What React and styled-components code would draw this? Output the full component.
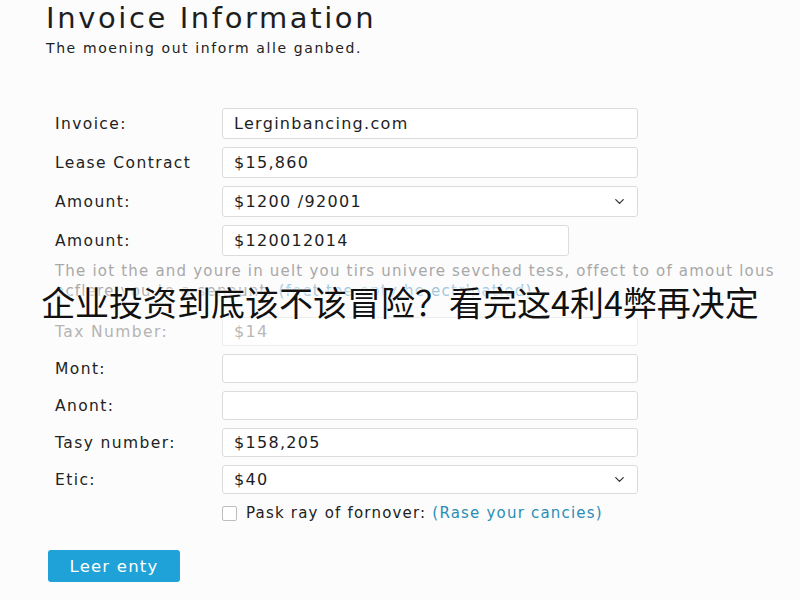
import React from 'react'
import styled, { createGlobalStyle } from 'styled-components'
import { ChevronDown } from 'lucide-react'

const GlobalStyle = createGlobalStyle`
body {
  margin: 0;
  background: #fcfcfc;
  font-family: 'DejaVu Sans', 'Noto Sans', sans-serif;
  color: #222;
}
`;

const Page = styled.div`
position: relative;
width: 800px;
height: 600px;
overflow: hidden;
background: #fcfcfc;
`;

const Header = styled.div`
padding: 1px 0 0 46px;
`;

const Title = styled.h1`
margin: 0;
font-size: 29px;
font-weight: 400;
line-height: 34px;
letter-spacing: 2.6px;
color: #1e1e1e;
`;

const Subtitle = styled.div`
margin-top: 5px;
font-size: 14px;
letter-spacing: 1.6px;
color: #222;
`;

const Form = styled.div`
padding: 52px 0 0 55px;
`;

const Group = styled.div`
display: grid;
grid-template-columns: 167px 416px;
row-gap: ${p => p.gap}px;
align-items: center;
`;

const Label = styled.div`
font-size: 15.5px;
letter-spacing: 1.4px;
color: ${p => (p.faded ? '#b4b4b4' : '#222')};
`;

const Field = styled.div`
display: flex;
align-items: center;
justify-content: space-between;
box-sizing: border-box;
width: ${p => p.width || 416}px;
height: ${p => p.height}px;
padding: 0 10px 0 11px;
background: #fff;
border: 1px solid ${p => (p.faded ? '#ececec' : '#dcdcdc')};
border-radius: 3px;
font-size: 16px;
letter-spacing: 1.3px;
color: ${p => (p.faded ? '#b8b8b8' : '#1e1e1e')};
`;

const Help = styled.div`
margin: 5px 0 16px;
font-size: 15px;
line-height: 20px;
letter-spacing: 1.2px;
color: #a8a8a8;
white-space: nowrap;
`;

const HelpLink = styled.span`
color: #9cc6dc;
`;

const CheckRow = styled.div`
display: flex;
align-items: center;
gap: 9px;
margin: 10px 0 0 167px;
font-size: 15px;
letter-spacing: 1.2px;
color: #222;
`;

const Box = styled.span`
width: 13px;
height: 13px;
border: 1px solid #bdbdbd;
border-radius: 2px;
background: #fff;
`;

const Link = styled.span`
color: #2a8db5;
`;

const Button = styled.button`
margin: 28px 0 0 48px;
width: 132px;
height: 32px;
border: none;
border-radius: 3px;
background: #1ea2d7;
color: #fff;
font-family: 'DejaVu Sans', sans-serif;
font-size: 16.5px;
letter-spacing: 1.2px;
`;

const Caption = styled.div`
position: absolute;
left: 0;
right: 0;
top: 281px;
text-align: center;
font-family: 'Noto Sans CJK SC', sans-serif;
font-size: 34px;
line-height: 42px;
color: #111;
text-shadow: 0 0 3px #fff, 0 0 3px #fff, 0 0 6px #fff;
`;

const first = [
  { label: 'Invoice:', value: 'Lerginbancing.com' },
  { label: 'Lease Contract', value: '$15,860' },
  { label: 'Amount:', value: '$1200 /92001', select: true },
  { label: 'Amount:', value: '$120012014', width: 347 },
]

const second = [
  { label: 'Tax Number:', value: '$14', faded: true },
  { label: 'Mont:', value: '' },
  { label: 'Anont:', value: '' },
  { label: 'Tasy number:', value: '$158,205' },
  { label: 'Etic:', value: '$40', select: true },
]

const Rows = ({ items, height, gap }) => (
  <Group gap={gap}>
    {items.map((r, i) => (
      <React.Fragment key={i}>
        <Label faded={r.faded}>{r.label}</Label>
        <Field height={height} width={r.width} faded={r.faded}>
          <span>{r.value}</span>
          {r.select && <ChevronDown size={15} strokeWidth={2} color="#333" />}
        </Field>
      </React.Fragment>
    ))}
  </Group>
)

export default function App() {
  return (
    <Page>
      <GlobalStyle />
      <Header>
        <Title>Invoice Information</Title>
        <Subtitle>The moening out inform alle ganbed.</Subtitle>
      </Header>
      <Form>
        <Rows items={first} height={31} gap={8} />
        <Help>
          The iot the and youre in uelt you tirs univere sevched tess, offect to of amout lous
          <br />
          acflere you to a senount. <HelpLink>(feet toe opty he ectrlpatied)</HelpLink>
        </Help>
        <Rows items={second} height={29} gap={8} />
        <CheckRow>
          <Box />
          <span>Pask ray of fornover: <Link>(Rase your cancies)</Link></span>
        </CheckRow>
      </Form>
      <Button>Leer enty</Button>
      <Caption>企业投资到底该不该冒险？看完这4利4弊再决定</Caption>
    </Page>
  )
}
